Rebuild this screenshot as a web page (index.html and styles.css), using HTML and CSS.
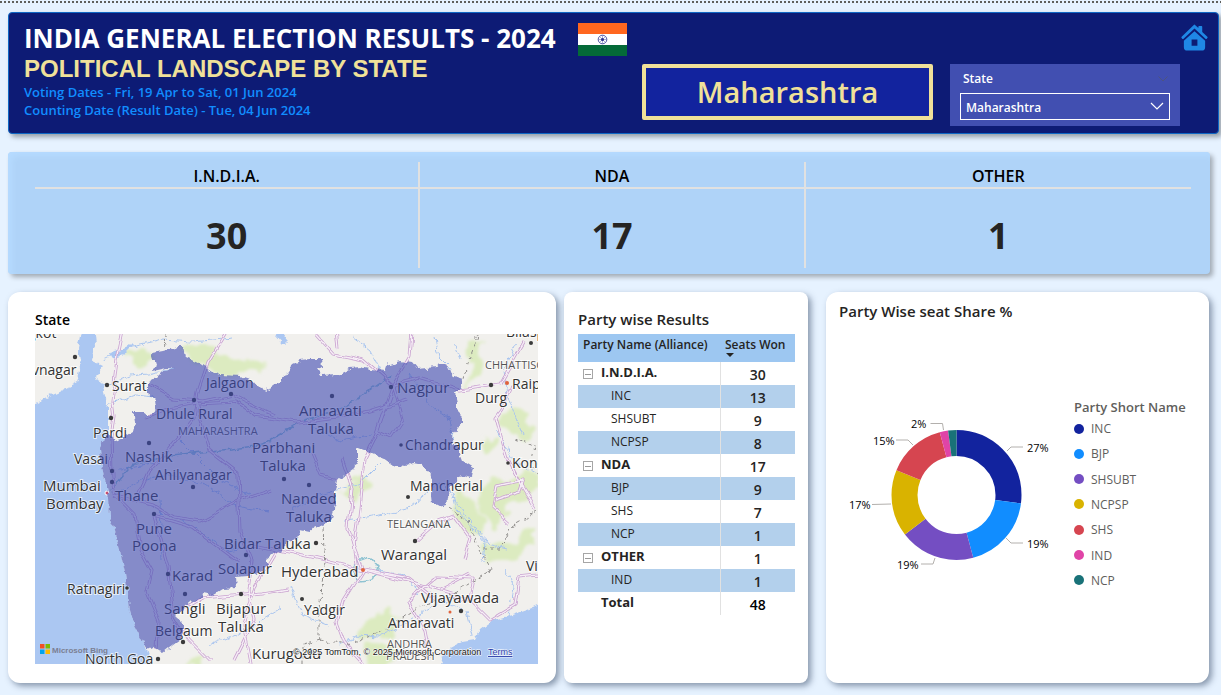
FILE: index.html
```html
<!DOCTYPE html>
<html lang="en">
<head>
<meta charset="utf-8">
<title>India General Election Results - 2024</title>
<link rel="stylesheet" href="styles.css">
</head>
<body>
<div class="rule"></div>
<header class="banner">
  <div class="titles">
    <h1>INDIA GENERAL ELECTION RESULTS - 2024</h1>
    <h2>POLITICAL LANDSCAPE BY STATE</h2>
    <p>Voting Dates - Fri, 19 Apr to Sat, 01 Jun 2024</p>
    <p>Counting Date (Result Date) - Tue, 04 Jun 2024</p>
  </div>
  <svg class="flag" viewBox="0 0 49 33" role="img" aria-label="Flag of India">
    <rect width="49" height="11" fill="#ff671f"/><rect y="11" width="49" height="11" fill="#fff"/><rect y="22" width="49" height="11" fill="#046a38"/>
    <g stroke="#2a2f8f" fill="none"><circle cx="24.500" cy="16.500" r="4.300" stroke-width=".8"/><path stroke-width=".4" d="M20.500 16.500h8M24.500 12.500v8M21.700 13.700l5.600 5.600M27.300 13.700l-5.600 5.600"/></g>
    <circle cx="24.500" cy="16.500" r="1.500" fill="#2a2f8f"/>
  </svg>
  <div class="state-name">Maharashtra</div>
  <div class="slicer">
    <div class="slicer-head">
      <label for="state">State</label>
      <svg class="mini" viewBox="0 0 10 6"><path d="M.5.5 5 5 9.500.5" fill="none" stroke="#4d5480"/></svg>
    </div>
    <div class="select-wrap">
      <select id="state"><option>Maharashtra</option></select>
      <svg class="chev" viewBox="0 0 14 9"><path d="M1 1l6 6 6-6" fill="none" stroke="#fff" stroke-width="1.200"/></svg>
    </div>
  </div>
  <a class="home" href="#" aria-label="Home">
    <svg viewBox="0 0 30 30"><path fill="#1f87e5" d="M15 1.500 19 5.300V4q0-.8.800-.8h2.400q.8 0 .8.800v5.200l5.300 5q.7.700 0 1.400l-.6.600q-.7.600-1.400 0L15 5.800 3.700 16.200q-.7.600-1.400 0l-.6-.6q-.7-.7 0-1.400L14 2.300q.5-.6 1-.8z"/><path fill="#1f87e5" fill-rule="evenodd" d="M15 8.500 26 18.300V25q0 3.500-3.500 3.500h-15Q4 28.500 4 25v-6.700zM12 17v6.500h6V17z"/></svg>
  </a>
</header>

<section class="kpis">
  <dl><dt>I.N.D.I.A.</dt><dd>30</dd></dl>
  <dl><dt>NDA</dt><dd>17</dd></dl>
  <dl><dt>OTHER</dt><dd>1</dd></dl>
</section>

<main class="cards">
<section class="card map-card">
  <h3>State</h3>
  <svg class="map" viewBox="35 334 503 330">
    <defs>
      <filter id="rough" x="-5%" y="-5%" width="110%" height="110%"><feTurbulence type="fractalNoise" baseFrequency=".13" numOctaves="3" seed="4"/><feDisplacementMap in="SourceGraphic" scale="7" xChannelSelector="R" yChannelSelector="G"/></filter>
      <filter id="wavy" x="-5%" y="-5%" width="110%" height="110%"><feTurbulence type="fractalNoise" baseFrequency=".06" numOctaves="1" seed="4"/><feDisplacementMap in="SourceGraphic" scale="9" xChannelSelector="R" yChannelSelector="G"/></filter>
      <filter id="soft" x="-30%" y="-30%" width="160%" height="160%"><feTurbulence type="fractalNoise" baseFrequency=".05" numOctaves="3" seed="9"/><feDisplacementMap in="SourceGraphic" scale="22" xChannelSelector="R" yChannelSelector="G"/><feGaussianBlur stdDeviation="1.500"/></filter>
      <g id="roads">
        <path d="M123 330l-6 30-5 40 2 16-3 20 1 40 4 20 18 18 6 35 12 22-5 22 12 28-2 28"/>
        <path d="M228 330l-20 32-10 30-4 26-24 30-20 22-12 26M195 400l15 50 28 22 2 60 12 28-4 30 6 30-20 40M146 418l20-8 30-6 40-2 20 14 40 6 40-5 34-6 38-12"/>
        <path d="M148 385l25 14 30 2 30-6 40 20M315 334l18 20 30 6 30 26 10 34-12 18-14-6 14-40M412 330l-2 26-18 30-18 52-10 20-6 60-4 26 4 24 50 10 28 22"/>
        <path d="M390 386l30-8 40 12 40-6 24-42M338 348l-2-18M512 385l-10 25-6 8 12 42 10 20 18 28M113 495l40 10 20 12 28 4 40-22 30-10M154 516l40 12 45 34M154 516l14 50 6 50 14 24 22 22"/>
        <path d="M363 570l-50-12-30-6-30-6M363 570l-20 32-6 20 8 22 18 20M363 570l56 14 50 16 4-22-35-2-30 25 16 30 5 26M363 568l-15-40 4-40-10-30M440 590l30-16M470 600l20 20 25-15 4-28 20-2M183 610l20-12 60-6 24-4M280 545l-25 42-12 36 8 40M337 480l-16-4-10-24M418 540l20-18 16-6 16 22-6 20M495 500l25-8 4-12-28 6-4 20 18 16"/>
      </g>
    </defs>
    <rect x="35" y="334" width="503" height="330" fill="#f1f0ed"/>
    <g filter="url(#soft)" fill="#dcebc0">
      <path d="M184 348l24-2 20 12 38 6-4 8-40 4-30-14z"/><path d="M128 352l22 4-4 8-22-4z"/>
      <path d="M470 345l14-4-4 30-12 16zM500 410l30-2 8 26-22 6-18-16zM455 485l20 15 12 25-15 8-25-22z"/>
      <path d="M475 490l26-12 37-5v22l-30 12-12 20-14-14zM488 545l26-3 24-14v18l-28 16-26-4zM360 625l26-16 14 8-10 18-32 5zM340 495l20-18 10 10-16 14zM368 645l26 2-4 17h-24z"/>
      <path d="M185 660l18-6-2 10z"/><path d="M480 440l20-4-10 20z"/>
    </g>
    <g filter="url(#rough)" fill="#abc7f2">
      <path d="M83 325 78 350 81 367 77 382 57 393 25 407V680H158L150 662 146 650 142 640 135 627 130 610 128 593 125 573 120 550 115 530 110 517 109 497 105 480 102 467 100 450 103 438 108 432 108 407 103 387 96 375 104 366 92 360 96 345 94 325z"/>
      <path d="M438 680 440 664 447 650 462 642 475 640 480 630 493 620 513 615 533 608 550 600V680z"/>
      <path d="M275 336l7-4 6 8-5 5zM110 353l12-3 8-6 2 2-8 8-12 4z"/>
    </g>
    <g filter="url(#rough)" fill="none" stroke="#a9c5ef" stroke-width="1">
      <path d="M100 388l30-12 18-2 26-5M103 360l24-12 36-8 30 2 40-4M105 405l30-10 20 2M352 336l18 14 10 20M435 337l4 20 12 12M455 345l6 14"/>
      <path d="M113 495l30-15 22-6 40 10 30 22 35 6M150 505l40 20 38 26 20-4M180 440l40 40 30 15M290 510l30-15 40-12 20-20M345 520l35-5 30-8 30-25 12 10 5 18 18 20 10 12-2 20"/>
      <path d="M370 570l35 5 15 20M410 375l20 30 18 12 8 30M455 500l15 20 18 24 20 5M300 420l40 20 30-5M340 645l20-10 18 2 25-12 40-25 22 12M467 612l6 24M505 570l8 16-4 30M210 645l30-12 40-25M35 470M515 345l-12 25 4 25 16 40M497 430l16 30 24 15M290 585l12 30 26 10M160 500l2 60M120 470l40-8"/>
    </g>
    <g filter="url(#rough)" fill="none" stroke-width="1.500" stroke="#8fc3d2"><path d="M110 492l22-27 40-10 60-6 30-4 40-24 40-12 30-20 20-14M355 562l14-5 9 10-5 12-14 2-6-10z"/></g>
    <g filter="url(#wavy)" fill="none" stroke-linejoin="round">
      <use href="#roads" stroke="#c9a2d0" stroke-width="3"/>
      <use href="#roads" stroke="#f6eef6" stroke-width="1.400"/>
    </g>
    <g fill="none" stroke="#8e8c8a" stroke-dasharray="4 3" filter="url(#rough)">
      <path d="M165 334l1 14M478 336l-8 20-6 24M449 508l20 15 10 25 22 0 10-22 27-15M480 550l12 20-30 18-12 8M323 528l2 40-6 40v32l30 4 40-15 12-10 20-14 35-8M320 640l-18 4v20M515 440l20 6-4 20 7 10"/>
    </g>
    <g class="labels">
      <text x="28" y="338">gkot</text><text x="32" y="375">vnagar</text><text x="112" y="391">Surat</text>
      <text x="206" y="388">Jalgaon</text><text x="156" y="419">Dhule Rural</text><text x="93" y="438">Pardi</text>
      <text x="74" y="464">Vasai</text><text class="big" x="125" y="462">Nashik</text><text x="155" y="480">Ahilyanagar</text>
      <text class="big" x="43" y="491">Mumbai</text><text class="big" x="46" y="509">Bombay</text><text class="big" x="115" y="501">Thane</text>
      <text class="big" x="136" y="534">Pune</text><text class="big" x="132" y="551">Poona</text><text x="67" y="594">Ratnagiri</text>
      <text class="big" x="172" y="581">Karad</text><text class="big" x="218" y="574">Solapur</text><text class="big" x="164" y="614">Sangli</text>
      <text class="big" x="216" y="614">Bijapur</text><text class="big" x="218" y="632">Taluka</text><text x="155" y="636">Belgaum</text>
      <text x="85" y="664">North Goa</text><text class="big" x="252" y="659">Kurugodu</text>
      <text class="big" x="299" y="416">Amravati</text><text class="big" x="308" y="434">Taluka</text><text class="big" x="252" y="453">Parbhani</text><text class="big" x="260" y="471">Taluka</text>
      <text class="big" x="397" y="393">Nagpur</text><text x="405" y="450">Chandrapur</text><text x="410" y="491">Mancherial</text>
      <text class="big" x="281" y="504">Nanded</text><text class="big" x="286" y="522">Taluka</text><text class="big" x="224" y="549">Bidar Taluka</text>
      <text class="big" x="281" y="577">Hyderabad</text><text class="big" x="381" y="560">Warangal</text><text x="304" y="615">Yadgir</text>
      <text class="big" x="421" y="603">Vijayawada</text><text x="388" y="628">Amaravati</text><text x="475" y="403">Durg</text>
      <text x="512" y="389">Raipur</text><text x="512" y="468">Kondagaon</text><text x="526" y="571">Visakhapatnam</text><text x="506" y="337">Bilaspur</text>
      <g class="region"><text x="178" y="435">MAHARASHTRA</text><text x="485" y="369">CHHATTISGARH</text><text x="387" y="528">TELANGANA</text><text x="387" y="648">ANDHRA</text><text x="386" y="660">PRADESH</text></g>
    </g>
    <g fill="#3a3a3a">
      <circle cx="75" cy="357" r="2.200"/><circle cx="107" cy="385" r="2.200"/><circle cx="111" cy="418" r="2.200"/><circle cx="194" cy="400" r="2.200"/><circle cx="231" cy="394" r="2.200"/><circle cx="149" cy="443" r="2.200"/><circle cx="112" cy="471" r="2.200"/><circle cx="112" cy="482" r="2.200"/><circle cx="193" cy="487" r="2.200"/><circle cx="154" cy="514" r="2.200"/><circle cx="168" cy="574" r="2.200"/><circle cx="185" cy="594" r="2.200"/><circle cx="127" cy="588" r="1.800"/><circle cx="241" cy="594" r="2.200"/><circle cx="246" cy="555" r="2.200"/><circle cx="183" cy="642" r="2.200"/><circle cx="158" cy="659" r="2.200"/><circle cx="284" cy="479" r="2.200"/><circle cx="309" cy="485" r="2.200"/><circle cx="332" cy="396" r="2.200"/><circle cx="391" cy="387" r="2.200"/><circle cx="401" cy="445" r="1.800"/><circle cx="408" cy="497" r="2"/><circle cx="316" cy="543" r="2.200"/><circle cx="302" cy="599" r="2"/><circle cx="415" cy="541" r="2.200"/><circle cx="461" cy="611" r="2.200"/><circle cx="491" cy="385" r="2.200"/><circle cx="531" cy="343" r="2"/><circle cx="508" cy="463" r="1.800"/>
    </g>
    <g fill="#e0623c"><circle cx="363" cy="570" r="2"/><circle cx="507" cy="383" r="2"/><circle cx="450" cy="612" r="1.500"/><circle cx="107" cy="493" r="2" fill="#c8506e" stroke="#fff"/></g>
    <path filter="url(#rough)" fill="#3a48b0" fill-opacity=".6" d="M152 353 163 351 177 347 183 347 185 357 200 364 212 372 220 375 240 376 253 380 259 387 270 391 275 383 280 382 287 372 293 363 300 360 310 359 322 359 323 367 317 369 322 376 337 375 350 368 360 367 370 369 385 371 387 365 400 361 412 363 417 369 427 368 437 367 442 365 450 369 453 377 463 380 461 387 454 392 457 403 457 412 462 417 462 423 452 435 453 443 458 450 462 460 473 467 471 477 462 475 453 485 450 490 448 497 447 505 440 507 432 503 431 495 432 480 430 473 423 465 413 463 405 467 393 465 383 458 373 454 357 448 357 460 353 470 343 477 337 480 335 490 335 503 330 520 322 527 315 525 310 532 300 530 297 538 287 543 282 553 277 552 267 560 267 567 258 573 248 576 235 577 236 588 223 589 213 595 203 593 202 598 190 602 183 608 175 615 183 622 183 632 180 640 173 645 163 653 153 647 147 650 142 640 135 627 130 610 128 593 125 573 120 550 115 530 110 517 109 497 105 480 102 467 100 450 103 438 108 434 115 440 123 438 133 432 135 423 133 412 143 412 148 416 157 408 156 400 148 393 148 383 157 378 163 372 174 369 167 368 153 371 155 363z"/>
    <path fill="#f25022" d="M40 644h4.500v4.500H40z"/><path fill="#7fba00" d="M45.500 644H50v4.500h-4.500z"/><path fill="#00a4ef" d="M40 649.500h4.500v4.500H40z"/><path fill="#ffb900" d="M45.500 649.500H50v4.500h-4.500z"/>
    <text class="bing" x="52" y="653">Microsoft Bing</text>
    <text class="credit" x="293" y="655">© 2025 TomTom, © 2025 Microsoft Corporation</text>
    <a href="#"><text class="credit terms" x="488" y="655">Terms</text></a>
  </svg>
</section>

<section class="card table-card">
  <h3>Party wise Results</h3>
  <table>
    <thead><tr><th>Party Name (Alliance)</th><th>Seats Won<span class="sort"></span></th></tr></thead>
    <tbody>
      <tr class="group"><th><button aria-label="Collapse I.N.D.I.A."></button>I.N.D.I.A.</th><td>30</td></tr>
      <tr class="alt"><th>INC</th><td>13</td></tr>
      <tr><th>SHSUBT</th><td>9</td></tr>
      <tr class="alt"><th>NCPSP</th><td>8</td></tr>
      <tr class="group"><th><button aria-label="Collapse NDA"></button>NDA</th><td>17</td></tr>
      <tr class="alt"><th>BJP</th><td>9</td></tr>
      <tr><th>SHS</th><td>7</td></tr>
      <tr class="alt"><th>NCP</th><td>1</td></tr>
      <tr class="group"><th><button aria-label="Collapse OTHER"></button>OTHER</th><td>1</td></tr>
      <tr class="alt"><th>IND</th><td>1</td></tr>
      <tr class="group total"><th>Total</th><td>48</td></tr>
    </tbody>
  </table>
</section>

<section class="card share-card">
  <h3>Party Wise seat Share %</h3>
  <div class="share">
    <svg class="donut" viewBox="839 398 221 182">
      <g fill="none" stroke-width="26" transform="rotate(-90 956.500 495)">
        <circle cx="956.500" cy="495" r="52" pathLength="48" stroke="#12239e" stroke-dasharray="13 35"/>
        <circle cx="956.500" cy="495" r="52" pathLength="48" stroke="#118dff" stroke-dasharray="9 39" stroke-dashoffset="-13"/>
        <circle cx="956.500" cy="495" r="52" pathLength="48" stroke="#744ec2" stroke-dasharray="9 39" stroke-dashoffset="-22"/>
        <circle cx="956.500" cy="495" r="52" pathLength="48" stroke="#d9b300" stroke-dasharray="8 40" stroke-dashoffset="-31"/>
        <circle cx="956.500" cy="495" r="52" pathLength="48" stroke="#d64550" stroke-dasharray="7 41" stroke-dashoffset="-39"/>
        <circle cx="956.500" cy="495" r="52" pathLength="48" stroke="#e044a7" stroke-dasharray="1 47" stroke-dashoffset="-46"/>
        <circle cx="956.500" cy="495" r="52" pathLength="48" stroke="#197278" stroke-dasharray="1 47" stroke-dashoffset="-47"/>
      </g>
      <path fill="none" stroke="#b3b0ad" d="M1007 451l4-4h12M1006 538l5 5h12M935 558l-2 6h-12M891 504l-19 .5M913 445l-5-5h-12M943.500 430l-1-6.500h-12"/>
      <text x="1027" y="452">27%</text><text x="1027" y="548">19%</text><text x="897" y="569">19%</text>
      <text x="849" y="509">17%</text><text x="873" y="445">15%</text><text x="911" y="428">2%</text>
    </svg>
    <div class="legend">
      <h4>Party Short Name</h4>
      <ul>
        <li class="inc">INC</li><li class="bjp">BJP</li><li class="shsubt">SHSUBT</li><li class="ncpsp">NCPSP</li><li class="shs">SHS</li><li class="ind">IND</li><li class="ncp">NCP</li>
      </ul>
    </div>
  </div>
</section>
</main>
</body>
</html>
```
FILE: styles.css
```css
* { box-sizing: border-box; }
body {
  margin: 0;
  background: #e6f2ff;
  color: #252423;
  font-family: "Open Sans", "Noto Sans", sans-serif;
}
h1, h2, h3, h4, p, dl, dd, ul { margin: 0; padding: 0; }
svg { display: block; }
.rule {
  height: 2px;
  margin-top: 1px;
  background: repeating-linear-gradient(90deg, #5f5f5b 0 2px, transparent 2px 4px);
}
.banner {
  display: flex;
  align-items: flex-start;
  height: 122px;
  margin: 9px 2px 0 8px;
  padding: 10px 9px 0 15px;
  background: #0d1b75;
  border: 1px solid #0f67c4;
  border-radius: 4px;
  box-shadow: 3px 3px 5px rgba(0, 0, 0, .35);
}
.titles { flex: 0 0 554px; white-space: nowrap; }
h1 { font-size: 26px; line-height: 31px; font-weight: 700; color: #fff; }
h2 { font: 700 24px/29px "Liberation Sans", Arial, sans-serif; color: #f0e199; }
.titles p { font-size: 13px; line-height: 18px; font-weight: 600; color: #118dff; }
.flag { flex: none; width: 49px; height: 33px; }
.state-name {
  flex: none;
  width: 291px;
  margin: 41px 17px 0 auto;
  border: 4px solid #f0e199;
  border-radius: 2px;
  background: #12239e;
  color: #f0e199;
  font-size: 29px;
  line-height: 48px;
  font-weight: 600;
  text-align: center;
}
.slicer {
  flex: none;
  width: 230px;
  height: 62px;
  margin-top: 41px;
  padding: 4px 10px 6px;
  background: #414fb1;
  color: #fff;
  font-size: 12px;
  font-weight: 600;
}
.slicer-head { display: flex; justify-content: space-between; align-items: center; height: 25px; padding: 0 2px 4px 3px; }
.mini { width: 10px; height: 6px; }
.select-wrap { display: grid; align-items: center; }
.select-wrap > * { grid-area: 1 / 1; }
.select-wrap select {
  height: 27px;
  padding: 2px 5px 0;
  border: 1px solid #fff;
  border-radius: 0;
  background: transparent;
  color: #fff;
  font: inherit;
  appearance: none;
}
.chev { justify-self: end; width: 14px; height: 9px; margin-right: 6px; pointer-events: none; }
.home { flex: none; width: 29px; }
.kpis {
  display: grid;
  grid-template: 100% / repeat(3, 1fr);
  height: 122px;
  margin: 18px 11px 0 8px;
  padding: 10px 19px 6px 27px;
  background: #afd3f8;
  border-radius: 4px;
  box-shadow: 3px 3px 5px rgba(0, 0, 0, .3), inset 4px 4px 6px #b6dbff;
  text-align: center;
}
.kpis dl:not(:last-child) { border-right: 2px solid #e1e1e1; }
.kpis dt { height: 27px; border-bottom: 2px solid #e1e1e1; font-size: 16px; line-height: 29px; font-weight: 600; color: #000; }
.kpis dd { font-size: 36px; line-height: 94px; font-weight: 700; }
.cards { display: grid; grid-template-columns: 548fr 252fr 401fr; margin: 18px 12px 12px 8px; }
.card { height: 391px; background: #fff; border-radius: 12px; box-shadow: 3px 3px 6px rgba(40, 60, 90, .5); }
.card h3 { font-size: 15px; line-height: 19px; font-weight: 600; }
.map-card { padding: 18px 18px 0 27px; }
.map-card h3 { color: #000; font-size: 14px; }
.map { width: 100%; margin-top: 5px; font-family: "Open Sans", sans-serif; }
.labels { font-size: 14px; fill: #333; stroke: #fff; stroke-opacity: .7; stroke-width: 2px; paint-order: stroke; }
.big { font-size: 15px; }
.region { font-size: 11px; fill: #555; }
.bing { font: 700 8px "Liberation Sans", sans-serif; fill: #7b7f92; }
.credit { font: 9px "Liberation Sans", sans-serif; fill: #111; stroke: #fff; stroke-width: 1px; paint-order: stroke; }
.terms { fill: #2338a8; text-decoration: underline; }
.table-card { margin-left: 8px; padding: 18px 13px 0 14px; border-radius: 8px; }
table { width: 100%; margin-top: 5px; border-collapse: collapse; table-layout: fixed; }
thead th { height: 28px; padding: 0 0 6px 5px; background: #9dc7f1; font-size: 12px; line-height: 20px; font-weight: 600; text-align: left; white-space: nowrap; }
thead th:first-child { width: 142px; }
.sort { display: block; width: 0; height: 0; margin: -2px 0 -2px 1px; border: 4px solid transparent; border-top-color: #252423; border-bottom: 0; }
tbody th, tbody td { height: 23px; padding: 0; }
tbody th { padding: 0 0 1px 33px; border-right: 1px solid #e1e1e1; font-size: 12px; line-height: 20px; font-weight: 400; text-align: left; }
tbody td { padding-top: 3px; font-size: 14px; line-height: 20px; font-weight: 600; text-align: center; }
.group th { padding: 0 0 3px 5px; font-size: 13px; font-weight: 700; }
.total th { padding-left: 23px; }
.total td { color: #000; }
.alt { background: #b3d0ec; }
tbody button {
  width: 10px;
  height: 10px;
  margin: 0 8px 0 0;
  padding: 0;
  vertical-align: -1px;
  border: 1px solid #a6a6a6;
  background: linear-gradient(#999, #999) center / 6px 1px no-repeat;
}
.share-card { margin-left: 18px; padding: 10px 13px 0; }
.share { display: flex; margin-top: 77px; }
.donut { flex: 0 1 221px; font-family: "Open Sans", sans-serif; font-size: 11px; fill: #000; align-self: flex-start; }
.legend { flex: none; margin-left: 14px; color: #605e5c; font-size: 12px; white-space: nowrap; }
.legend h4 { font-size: 13px; line-height: 18px; font-weight: 600; }
.legend ul { display: grid; align-content: space-between; height: 177px; list-style: none; }
.legend li { display: flex; align-items: center; height: 25px; }
.legend li::before { content: ""; width: 10px; height: 10px; margin-right: 7px; border-radius: 50%; background: currentColor; }
.inc::before { color: #12239e; }
.bjp::before { color: #118dff; }
.shsubt::before { color: #744ec2; }
.ncpsp::before { color: #d9b300; }
.shs::before { color: #d64550; }
.ind::before { color: #e044a7; }
.ncp::before { color: #197278; }
```
